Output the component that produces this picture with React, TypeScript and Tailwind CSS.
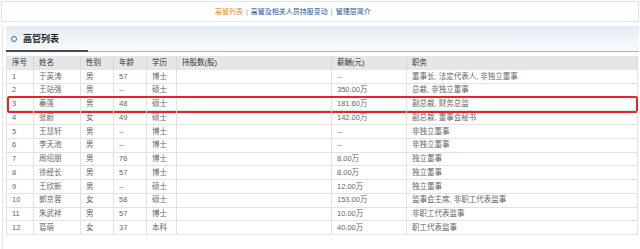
import React from "react";

const rows = [
  ["1", "于英涛", "男", "57", "博士", "", "--", "董事长, 法定代表人, 非独立董事"],
  ["2", "王站强", "男", "--", "硕士", "", "350.00万", "总裁, 非独立董事"],
  ["3", "秦莲", "男", "48", "硕士", "", "181.60万", "副总裁, 财务总监"],
  ["4", "张蔚", "女", "49", "硕士", "", "142.00万", "副总裁, 董事会秘书"],
  ["5", "王慧轩", "男", "--", "博士", "", "--", "非独立董事"],
  ["6", "李天池", "男", "--", "博士", "", "--", "非独立董事"],
  ["7", "周绍朋", "男", "76", "博士", "", "8.00万", "独立董事"],
  ["8", "徐经长", "男", "57", "博士", "", "8.00万", "独立董事"],
  ["9", "王欣新", "男", "--", "硕士", "", "12.00万", "独立董事"],
  ["10", "郭京蓉", "女", "58", "硕士", "", "153.00万", "监事会主席, 非职工代表监事"],
  ["11", "朱武祥", "男", "57", "博士", "", "10.00万", "非职工代表监事"],
  ["12", "葛萌", "女", "37", "本科", "", "40.00万", "职工代表监事"],
];

const headers = ["序号", "姓名", "性别", "年龄", "学历", "持股数(股)", "薪酬(元)", "职务"];

const grid = "grid grid-cols-[27px_47px_33px_33px_30px_155px_75px_1fr]";

export default function App() {
  return (
    <div
      className="w-[640px] h-[249px] bg-white overflow-hidden text-[7.5px] leading-none"
      style={{ fontFamily: '"Liberation Sans", "Noto Sans CJK SC", sans-serif' }}
    >
      {/* top nav */}
      <div className="mx-[1px] mt-[1px] h-[21px] border border-[#dde4ec] flex items-center text-[7px] text-[#1f4f8f]">
        <div className="ml-[213px] flex items-center">
          <span className="text-[#f08c2a]">高管列表</span>
          <span className="mx-[3px] text-[#8aa0b8]">|</span>
          <span>高管及相关人员持股变动</span>
          <span className="mx-[3px] text-[#8aa0b8]">|</span>
          <span>管理层简介</span>
        </div>
      </div>

      <div className="mt-[4px] ml-[2px] mr-[1px] border-l border-[#dfe6ee] h-[230px]">
        {/* title bar */}
        <div className="ml-[3px] h-[26px] bg-linear-to-b from-[#e6ecf3] to-[#f9fbfd] flex items-center relative">
          <span className="ml-[5px] w-[6px] h-[6px] rounded-full border-[1.5px] border-[#2f6ea8]" />
          <span className="ml-[6px] text-[9px] font-bold text-[#222]">高管列表</span>
          <div className="absolute left-0 right-0 bottom-0 h-[1px] bg-[#a7b5c3]" />
          <div className="absolute left-0 w-[82px] bottom-0 h-[2px] bg-[#3d4d5e]" />
        </div>

        {/* table */}
        <div className="ml-[3px] mt-[4px] w-[632px] border-l border-[#e2e2e2]">
          <div className={`${grid} h-[14px] bg-[#e6e6e6] text-[#333]`}>
            {headers.map((h, i) => (
              <div key={i} className="pl-[5px] flex items-center border-r border-[#d8d8d8] whitespace-nowrap">
                {h}
              </div>
            ))}
          </div>
          {rows.map((r, ri) => (
            <div key={ri} className={`${grid} h-[13.75px] text-[#666] relative`}>
              {r.map((c, ci) => (
                <div
                  key={ci}
                  className="pl-[5px] flex items-center border-r border-b border-[#e2e2e2] whitespace-nowrap"
                >
                  {c}
                </div>
              ))}
              {ri === 2 && (
                <div className="absolute left-0 right-0 -top-[2px] -bottom-[2px] border-2 border-[#e3252b] rounded-[2px]" />
              )}
            </div>
          ))}
        </div>
      </div>
    </div>
  );
}
